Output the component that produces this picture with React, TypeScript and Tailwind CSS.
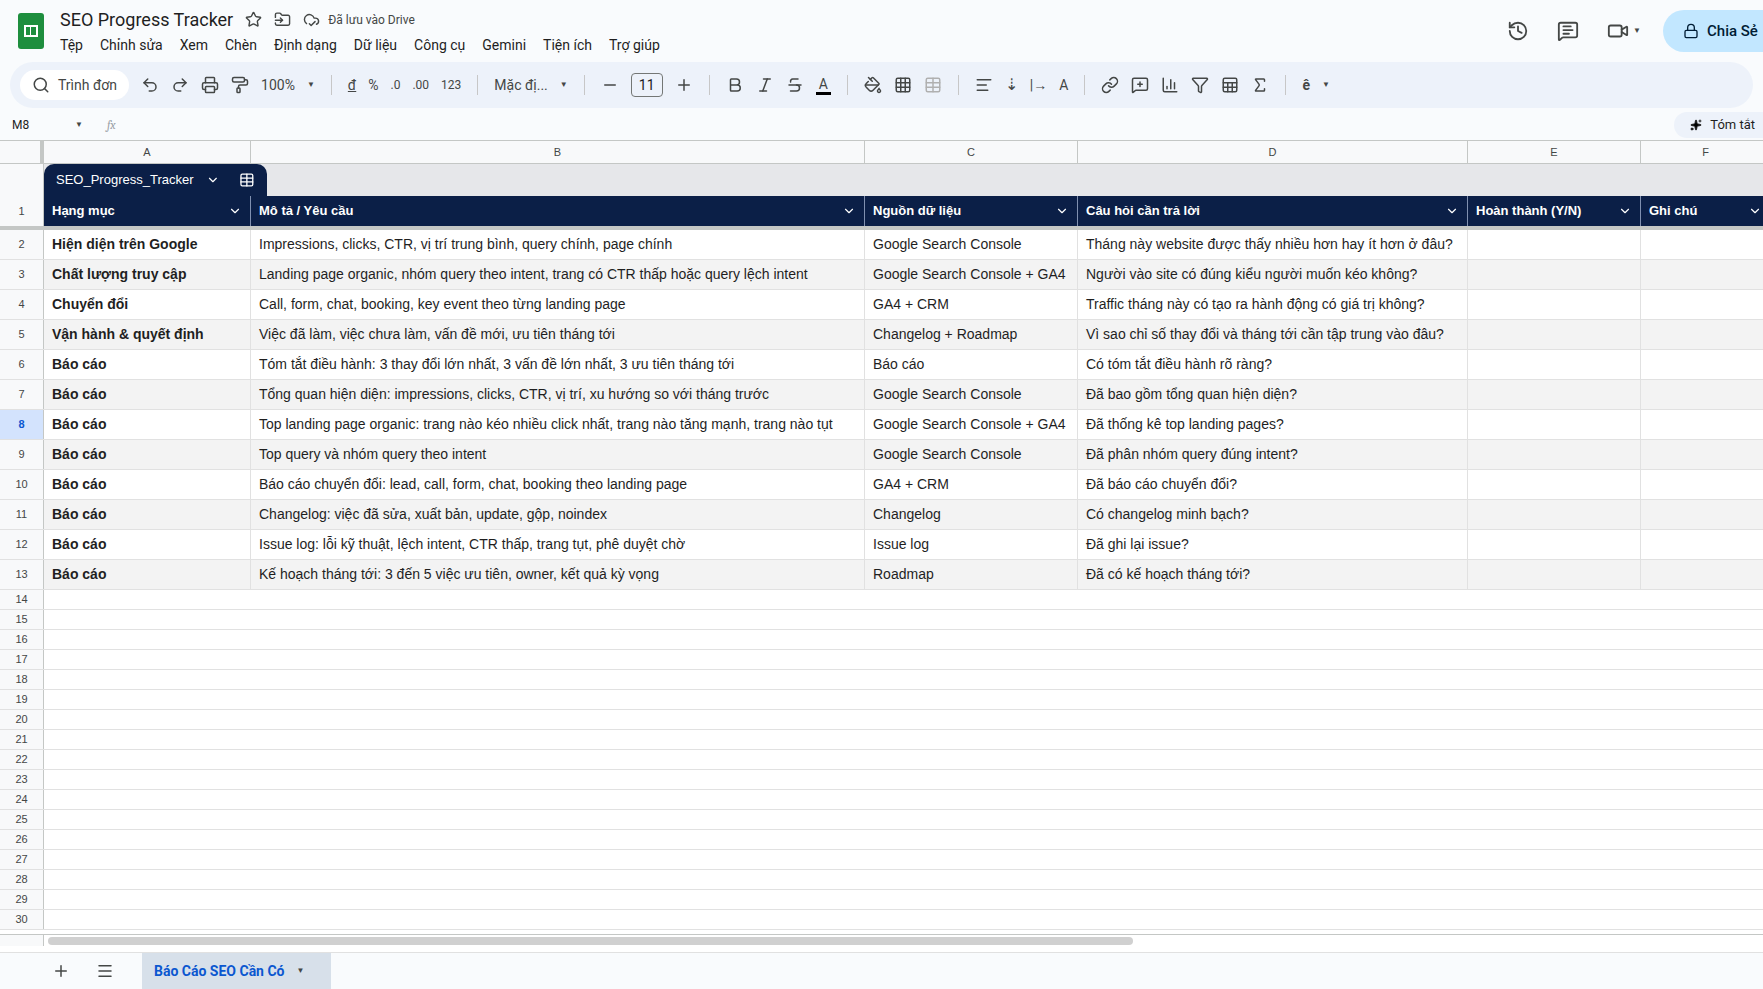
import { Star, FolderInput, CloudCheck, Search, Undo2, Redo2, Printer, PaintRoller, ChevronDown, Minus, Plus, Bold, Italic, Strikethrough, PaintBucket, Grid3x3, AlignLeft, Link, MessageSquarePlus, BarChart3, Filter, Sigma, History, MessageSquareText, Video, Lock, Sparkles, Menu, Sheet, Table } from "lucide-react";

const cols = [
  { k: "A", w: 207 },
  { k: "B", w: 614 },
  { k: "C", w: 213 },
  { k: "D", w: 390 },
  { k: "E", w: 173 },
  { k: "F", w: 130 },
];

const heads = ["Hạng mục", "Mô tả / Yêu cầu", "Nguồn dữ liệu", "Câu hỏi cần trả lời", "Hoàn thành (Y/N)", "Ghi chú"];

const rows = [
  ["Hiện diện trên Google", "Impressions, clicks, CTR, vị trí trung bình, query chính, page chính", "Google Search Console", "Tháng này website được thấy nhiều hơn hay ít hơn ở đâu?"],
  ["Chất lượng truy cập", "Landing page organic, nhóm query theo intent, trang có CTR thấp hoặc query lệch intent", "Google Search Console + GA4", "Người vào site có đúng kiểu người muốn kéo không?"],
  ["Chuyển đổi", "Call, form, chat, booking, key event theo từng landing page", "GA4 + CRM", "Traffic tháng này có tạo ra hành động có giá trị không?"],
  ["Vận hành & quyết định", "Việc đã làm, việc chưa làm, vấn đề mới, ưu tiên tháng tới", "Changelog + Roadmap", "Vì sao chỉ số thay đổi và tháng tới cần tập trung vào đâu?"],
  ["Báo cáo", "Tóm tắt điều hành: 3 thay đổi lớn nhất, 3 vấn đề lớn nhất, 3 ưu tiên tháng tới", "Báo cáo", "Có tóm tắt điều hành rõ ràng?"],
  ["Báo cáo", "Tổng quan hiện diện: impressions, clicks, CTR, vị trí, xu hướng so với tháng trước", "Google Search Console", "Đã bao gồm tổng quan hiện diện?"],
  ["Báo cáo", "Top landing page organic: trang nào kéo nhiều click nhất, trang nào tăng mạnh, trang nào tụt", "Google Search Console + GA4", "Đã thống kê top landing pages?"],
  ["Báo cáo", "Top query và nhóm query theo intent", "Google Search Console", "Đã phân nhóm query đúng intent?"],
  ["Báo cáo", "Báo cáo chuyển đổi: lead, call, form, chat, booking theo landing page", "GA4 + CRM", "Đã báo cáo chuyển đổi?"],
  ["Báo cáo", "Changelog: việc đã sửa, xuất bản, update, gộp, noindex", "Changelog", "Có changelog minh bạch?"],
  ["Báo cáo", "Issue log: lỗi kỹ thuật, lệch intent, CTR thấp, trang tụt, phê duyệt chờ", "Issue log", "Đã ghi lại issue?"],
  ["Báo cáo", "Kế hoạch tháng tới: 3 đến 5 việc ưu tiên, owner, kết quả kỳ vọng", "Roadmap", "Đã có kế hoạch tháng tới?"],
];

const I = "w-[18px] h-[18px] text-[#444746]";

function Sep() {
  return <div className="w-px h-5 bg-[#c7c7c7] mx-1" />;
}

export default function App() {
  return (
    <div className="w-[1763px] h-[989px] overflow-hidden bg-[#f9fbfd] flex flex-col text-[#1f1f1f]" style={{ fontFamily: "Roboto, 'Liberation Sans', sans-serif" }}>
      {/* title bar */}
      <div className="h-[62px] flex items-center pl-[18px] pr-0 shrink-0">
        <div className="w-[26px] h-[36px] bg-[#1e8e3e] rounded-[3px] flex items-center justify-center mr-4">
          <div className="w-[14px] h-[12px] border-2 border-white grid grid-cols-2"><div className="border-r border-white" /></div>
        </div>
        <div className="flex flex-col">
          <div className="flex items-center gap-3">
            <span className="text-[18px]">SEO Progress Tracker</span>
            <Star className="w-[17px] h-[17px] text-[#444746]" />
            <FolderInput className="w-[17px] h-[17px] text-[#444746]" />
            <span className="flex items-center gap-2 text-[12px] text-[#444746]"><CloudCheck className="w-[17px] h-[17px]" />Đã lưu vào Drive</span>
          </div>
          <div className="flex gap-[17px] text-[14px] mt-[2px]">
            {["Tệp", "Chỉnh sửa", "Xem", "Chèn", "Định dạng", "Dữ liệu", "Công cụ", "Gemini", "Tiện ích", "Trợ giúp"].map((m) => <span key={m}>{m}</span>)}
          </div>
        </div>
        <div className="ml-auto flex items-center">
          <History className="w-[22px] h-[22px] text-[#444746] mr-[28px]" />
          <MessageSquareText className="w-[22px] h-[22px] text-[#444746] mr-[28px]" />
          <Video className="w-[22px] h-[22px] text-[#444746]" />
          <span className="text-[8px] text-[#444746] ml-1 mr-[22px]">▼</span>
          <div className="h-[42px] w-[100px] rounded-l-full bg-[#c2e7ff] flex items-center pl-5 gap-2 text-[15px] font-medium text-[#001d35]">
            <Lock className="w-[16px] h-[16px]" />Chia Sẻ
          </div>
        </div>
      </div>
      {/* toolbar */}
      <div className="h-[46px] mx-[10px] rounded-full bg-[#edf2fa] flex items-center px-[14px] gap-[12px] text-[14px] text-[#444746] shrink-0">
        <div className="flex items-center gap-2 bg-white rounded-full h-[30px] px-3 -ml-1"><Search className="w-[18px] h-[18px]" /><span>Trình đơn</span></div>
        <Undo2 className={I} /><Redo2 className={I} /><Printer className={I} /><PaintRoller className={I} />
        <span>100%</span><span className="text-[8px]">▼</span>
        <Sep />
        <span className="underline">đ</span><span>%</span><span className="text-[12px]">.0</span><span className="text-[12px]">.00</span><span className="text-[12px]">123</span>
        <Sep />
        <span>Mặc đị...</span><span className="text-[8px]">▼</span>
        <Sep />
        <Minus className={I} />
        <div className="w-[32px] h-[24px] border border-[#747775] rounded flex items-center justify-center text-[#1f1f1f]">11</div>
        <Plus className={I} />
        <Sep />
        <Bold className={I} /><Italic className={I} /><Strikethrough className={I} />
        <span className="border-b-[3px] border-black leading-4 px-[3px]">A</span>
        <Sep />
        <PaintBucket className={I} /><Grid3x3 className={I} /><Table className="w-[18px] h-[18px] text-[#b0b0b0]" />
        <Sep />
        <AlignLeft className={I} /><span className="text-[16px]">⇣</span><span>|→</span><span>A</span>
        <Sep />
        <Link className={I} /><MessageSquarePlus className={I} /><BarChart3 className={I} /><Filter className={I} /><Sheet className={I} /><Sigma className={I} />
        <Sep />
        <span className="font-bold">ê</span><span className="text-[8px]">▼</span>
      </div>
      {/* formula bar */}
      <div className="h-[30px] flex items-center text-[12px] text-[#1f1f1f] shrink-0 mt-[2px]">
        <span className="w-[75px] pl-3">M8</span>
        <span className="text-[8px] text-[#444746]">▼</span>
        <span className="ml-6 italic text-[#9aa0a6] font-serif">fx</span>
        <div className="ml-auto h-[26px] rounded-l-full bg-[#edf2fa] flex items-center gap-2 pl-4 pr-2 text-[13px]"><Sparkles className="w-[12px] h-[12px] fill-black" />Tóm tắt</div>
      </div>
      {/* grid */}
      <div className="flex-1 bg-white flex flex-col text-[14px]" style={{ fontFamily: "'Liberation Sans', Arial, sans-serif" }}>
        <div className="flex h-[24px] border-b border-[#c4c7c5] border-t bg-[#f8f9fa] text-[11px] text-[#444746]">
          <div className="w-[44px] border-r-4 border-[#c4c7c5] shrink-0" />
          {cols.map((c) => <div key={c.k} style={{ width: c.w }} className="shrink-0 border-r border-[#c4c7c5] flex items-center justify-center">{c.k}</div>)}
        </div>
        <div className="flex h-[32px] bg-[#e6e7ea]">
          <div className="w-[44px] bg-[#f8f9fa] border-r border-[#c4c7c5] shrink-0" />
          <div className="h-full w-[223px] bg-[#0b1f47] rounded-t-[10px] flex items-center px-3 gap-3 text-white text-[13px]">
            <span>SEO_Progress_Tracker</span><ChevronDown className="w-[14px] h-[14px]" /><Table className="w-[16px] h-[16px] ml-2" />
          </div>
        </div>
        <div className="flex h-[34px] border-b-4 border-[#c4c7c5]">
          <div className="w-[44px] bg-[#f8f9fa] border-r border-[#c4c7c5] shrink-0 flex items-center justify-center text-[11px] text-[#444746]">1</div>
          {heads.map((h, i) => (
            <div key={h} style={{ width: cols[i].w }} className="shrink-0 bg-[#0b1f47] border-r border-[#8090b0] text-white font-bold text-[13px] flex items-center justify-between px-2">
              <span>{h}</span><ChevronDown className="w-[14px] h-[14px]" />
            </div>
          ))}
        </div>
        {rows.map((r, ri) => (
          <div key={ri} className={`flex h-[30px] border-b border-[#e1e1e1] ${ri % 2 === 1 ? "bg-[#f3f3f3]" : "bg-white"}`}>
            <div className={`w-[44px] shrink-0 border-r border-[#c4c7c5] flex items-center justify-center text-[11px] ${ri === 6 ? "bg-[#d3e3fd] text-[#0b57d0] font-bold" : "bg-[#f8f9fa] text-[#444746]"}`}>{ri + 2}</div>
            {cols.map((c, ci) => (
              <div key={c.k} style={{ width: c.w }} className={`shrink-0 border-r border-[#e1e1e1] flex items-center px-2 whitespace-nowrap overflow-hidden ${ci === 0 ? "font-bold" : ""}`}>{r[ci] ?? ""}</div>
            ))}
          </div>
        ))}
        {Array.from({ length: 17 }, (_, i) => (
          <div key={i} className="flex h-[20px] border-b border-[#e1e1e1]">
            <div className="w-[44px] shrink-0 bg-[#f8f9fa] border-r border-[#c4c7c5] flex items-center justify-center text-[11px] text-[#444746]">{i + 14}</div>
          </div>
        ))}
        <div className="flex h-[12px] border-t border-[#c4c7c5] mt-[4px]">
          <div className="w-[44px] bg-[#f8f9fa] border-r border-[#c4c7c5] shrink-0" />
          <div className="w-[1085px] h-[8px] mt-[2px] ml-1 rounded-full bg-[#d0d0d0]" />
        </div>
      </div>
      <div className="h-[37px] flex items-stretch bg-[#f9fbfd] border-t border-[#e1e1e1] shrink-0">
        <div className="flex items-center gap-[26px] pl-[52px] pr-[28px] text-[#444746]">
          <Plus className="w-[18px] h-[18px]" /><Menu className="w-[18px] h-[18px]" />
        </div>
        <div className="bg-[#d7e0ea] flex items-center px-3 gap-3 text-[14px] font-bold text-[#0b57d0] w-[189px]">
          Báo Cáo SEO Cần Có<span className="text-[8px] text-[#444746]">▼</span>
        </div>
      </div>
    </div>
  );
}
